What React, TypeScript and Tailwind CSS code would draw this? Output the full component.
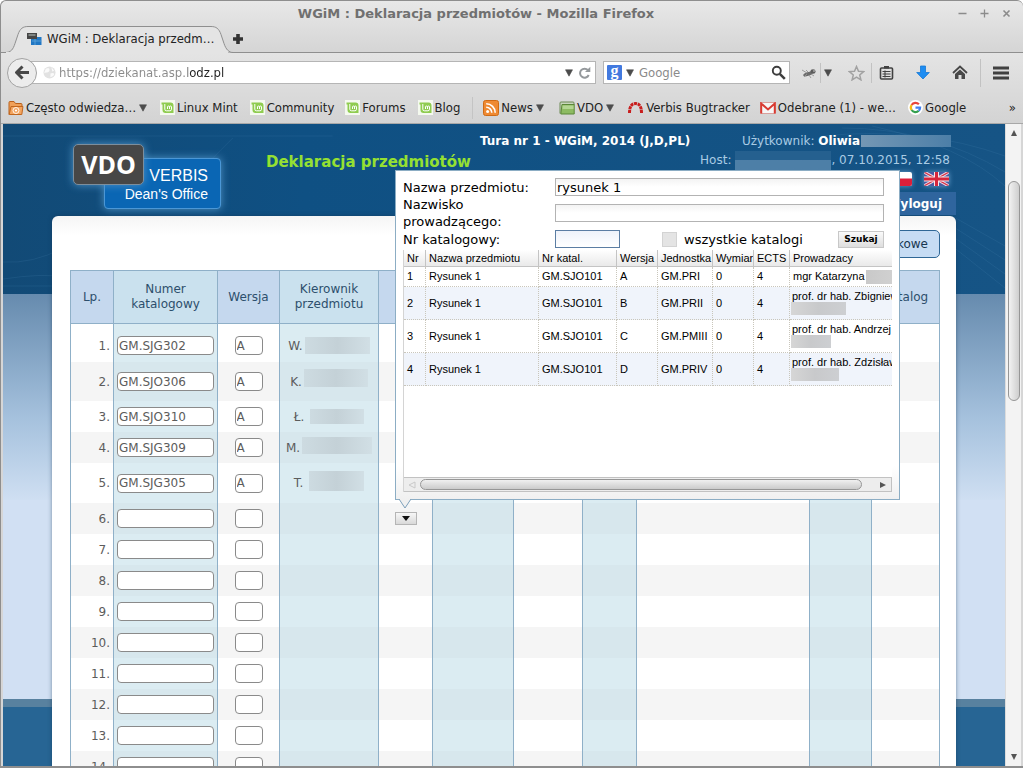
import React from "react";

const ui = "font-['DejaVu_Sans_Condensed','DejaVu_Sans',sans-serif]";

function MintIcon() {
  return (
    <svg width="15" height="15" viewBox="0 0 15 15" aria-hidden="true">
      <rect width="15" height="15" fill="#f4f9ee" />
      <path d="M1.5 2.5h9a3 3 0 0 1 3 3v7.5h-8a3 3 0 0 1-3-3V4.500h-1z" fill="#8fcc50" />
      <path d="M4.800 4v5.200a1.600 1.600 0 0 0 1.600 1.600h3.500a1.600 1.600 0 0 0 1.600-1.600V7a1 1 0 0 0-2 0v2M9.500 8V7a1 1 0 0 0-2 0v2" fill="none" stroke="#fff" strokeWidth="1" />
    </svg>
  );
}

function FolderStar() {
  return (
    <svg width="16" height="16" viewBox="0 0 16 16" aria-hidden="true">
      <path d="M1 14.500V2.500q0-1 1-1h4l1.500 2H13q1 0 1 1v2" fill="#f0a058" stroke="#b8601c" />
      <path d="M3 6.500h12l-1.200 8H1.200z" fill="#f3a560" stroke="#c0661e" />
      <circle cx="8" cy="10.500" r="3" fill="none" stroke="#fff" strokeWidth=".9" />
      <circle cx="8" cy="10.500" r="1.100" fill="#fff" />
    </svg>
  );
}

function RssIcon() {
  return (
    <svg width="16" height="16" viewBox="0 0 16 16" aria-hidden="true">
      <rect x=".5" y=".5" width="15" height="15" rx="2" fill="#ef8a33" stroke="#cf6a14" />
      <circle cx="4.600" cy="11.400" r="1.500" fill="#fff" />
      <path d="M3.200 7.200a5.600 5.600 0 0 1 5.600 5.600M3.200 3.800a9 9 0 0 1 9 9" fill="none" stroke="#fff" strokeWidth="1.600" />
    </svg>
  );
}

function GreenFolder() {
  return (
    <svg width="16" height="16" viewBox="0 0 16 16" aria-hidden="true">
      <path d="M1 13.500V3q0-1 1-1h12q1 0 1 1v2" fill="#c9d6bd" stroke="#6d8a55" />
      <path d="M3 4.500h12.200v9.500H1.800z" fill="#8dbb62" stroke="#5b8738" />
      <path d="M3.500 5.500h11v3.500h-11z" fill="#b4d692" />
    </svg>
  );
}

function BugArc() {
  return (
    <svg width="17" height="14" viewBox="0 0 17 14" aria-hidden="true">
      <path d="M2.500 12C2.500 5 5 2.500 8.500 2.500s6 2.500 6 9.500" fill="none" stroke="#c81e1e" strokeWidth="3" strokeDasharray="3 .7" />
    </svg>
  );
}

function GmailIcon() {
  return (
    <svg width="16" height="12" viewBox="0 0 16 12" aria-hidden="true">
      <rect x="1" y=".5" width="14" height="11" fill="#f6f6f6" stroke="#d9a09c" />
      <path d="M1.200 11.500V1.500L8 7.500l6.800-6v10" fill="none" stroke="#d93a31" strokeWidth="2" />
    </svg>
  );
}

function GoogleG() {
  return (
    <svg width="15" height="15" viewBox="0 0 15 15" aria-hidden="true">
      <circle cx="7.500" cy="7.500" r="7.500" fill="#fff" />
      <g fill="none" strokeWidth="2.200">
        <path d="M3.600 5A4.600 4.600 0 0 1 10.900 4.300" stroke="#e8453c" />
        <path d="M3.600 10A4.600 4.600 0 0 1 3.600 5" stroke="#f5ba15" />
        <path d="M10.700 10.800A4.600 4.600 0 0 1 3.600 10" stroke="#34a050" />
        <path d="M7.500 7.700h4.600a4.600 4.600 0 0 1-1.400 3.100" stroke="#4280ef" />
      </g>
    </svg>
  );
}

function Caret() {
  return (
    <svg width="8" height="8" viewBox="0 0 8 8" aria-hidden="true" className="shrink-0">
      <path d="M.5 .8h7L4 7.200z" fill="#4c4c4c" stroke="#4c4c4c" strokeWidth=".6" />
    </svg>
  );
}

function TitleBar() {
  const b = "flex h-4 w-[22px] items-center justify-center";
  return (
    <div className="flex h-[25px] shrink-0 items-center">
      <h1 className="flex-1 text-center font-['DejaVu_Sans',sans-serif] text-[13px] leading-[16px] font-bold text-[#707070]">
        WGiM : Deklaracja przedmiotów - Mozilla Firefox
      </h1>
      <div className="flex pr-[6px] text-[#8b8b8b]">
        <button className={b} aria-label="Minimize"><svg width="9" height="9" viewBox="0 0 9 9"><path d="M.5 4.500h8" stroke="currentColor" strokeWidth="1.300" /></svg></button>
        <button className={b} aria-label="Maximize"><svg width="9" height="9" viewBox="0 0 9 9"><path d="M.5 4.500h8M4.500 .5v8" stroke="currentColor" strokeWidth="1.300" /></svg></button>
        <button className={b} aria-label="Close"><svg width="9" height="9" viewBox="0 0 9 9"><path d="M1.500 1.500l6 6M7.500 1.500l-6 6" stroke="currentColor" strokeWidth="1.600" /></svg></button>
      </div>
    </div>
  );
}

function TabStrip() {
  return (
    <div className={"flex h-[27px] shrink-0 items-stretch border-b border-[#8f8f8f] text-[13px] " + ui}>
      <div className="relative w-[232px]">
        <svg className="absolute top-0 left-0" width="232" height="28" viewBox="0 0 232 28" aria-hidden="true">
          <path d="M1 26.500h3c6 0 8-3 10-9l3-9c2-6 5-8 10-8h183c5 0 8 2 10 8l3 9c2 6 5 9 9 9" fill="#e4e4e4" stroke="#8f8f8f" />
          <path d="M5 26.500h222" stroke="#e4e4e4" />
        </svg>
        <button className="relative flex h-[26px] w-full items-center gap-[5px] pl-[25px] text-[#222]">
          <svg width="16" height="14" viewBox="0 0 16 14" aria-hidden="true">
            <rect x="5" y="5" width="10.500" height="8" fill="#2177c4" />
            <path d="M6 9h9M9 6v7" stroke="#63a7dc" strokeWidth=".8" />
            <rect x="1" y="1" width="10" height="6" fill="#454545" />
            <path d="M2.500 3h7" stroke="#b8c4c0" strokeWidth="1.200" />
          </svg>
          WGiM : Deklaracja przedm…
        </button>
      </div>
      <button aria-label="New tab" className="flex items-center">
        <svg width="10" height="10" viewBox="0 0 10 10"><path d="M0 5h10M5 0v10" stroke="#333" strokeWidth="3.600" /></svg>
      </button>
    </div>
  );
}

function NavBar() {
  return (
    <div className={"flex h-[39px] shrink-0 items-center pr-[14px] pl-[6px] text-[13px] " + ui}>
      <button aria-label="Back" className="relative z-10 flex size-[30px] shrink-0 items-center justify-center rounded-full border border-[#a3a3a3] bg-[#ececec]">
        <svg width="14" height="15" viewBox="0 0 14 15"><path d="M7.500 1.500l-6 6 6 6M2 7.500h12" fill="none" stroke="#484848" strokeWidth="3" /></svg>
      </button>
      <div className="-ml-[6px] flex h-[23px] flex-1 items-center border border-[#b5b5b5] bg-white pr-[4px] pl-[11px]">
        <svg width="13" height="13" viewBox="0 0 14 14" aria-hidden="true" className="mr-[3px] shrink-0">
          <circle cx="7" cy="7" r="6.500" fill="#e2e2e2" />
          <path d="M3 3q4-2 4 1T4 7 1 8M8 8q4-1 4 1t-4 3zM9 1l3 4-2 1z" fill="#fafafa" />
        </svg>
        <input
          aria-label="Address"
          defaultValue="https://dziekanat.asp.lodz.pl"
          className="w-0 min-w-0 flex-1 bg-linear-to-r from-[#8a8a8a] from-[129px] to-[#222] to-[129px] bg-clip-text text-transparent caret-black outline-none"
        />
        <Caret />
        <button aria-label="Reload" className="ml-[5px]">
          <svg width="13" height="13" viewBox="0 0 13 13"><path d="M10 4.200A4.500 4.500 0 1 0 10.700 9" fill="none" stroke="#95999c" strokeWidth="2" /><path d="M12.300 .8v5.200H7z" fill="#95999c" /></svg>
        </button>
      </div>
      <div className="ml-[7px] flex h-[23px] w-[187px] items-center border border-[#b5b5b5] bg-white px-[3px]">
        <span className="flex size-[15px] items-center justify-center rounded-[1px] bg-[#4279df] pb-[3px] font-['Liberation_Serif',serif] text-[16px] leading-none font-bold text-white">g</span>
        <span className="ml-[4px] flex"><Caret /></span>
        <input aria-label="Search" placeholder="Google" className="ml-[5px] w-0 min-w-0 flex-1 outline-none placeholder:text-[#8a8a8a]" />
        <button aria-label="Run search">
          <svg width="15" height="15" viewBox="0 0 15 15"><circle cx="5.800" cy="5.800" r="4" fill="none" stroke="#3e3e3e" strokeWidth="1.900" /><path d="M8.800 8.800l5 5" stroke="#3e3e3e" strokeWidth="2.600" /></svg>
        </button>
      </div>
      <button aria-label="Firebug" className="ml-[11px]">
        <svg width="16" height="14" viewBox="0 0 16 14"><ellipse cx="7" cy="8" rx="5" ry="1.800" transform="rotate(-18 7 8)" fill="#6c6c6c" /><ellipse cx="12" cy="5.500" rx="2.600" ry="2.200" fill="#5c5c5c" /><path d="M1 4l5 3M3 11l3-3M8 9l2 3M10 8l3 2M7 6l-2-2" stroke="#959595" strokeWidth=".9" /><circle cx="13" cy="5" r=".8" fill="#d6d6d6" /></svg>
      </button>
      <span className="ml-[3px] h-[20px] w-px bg-[#c2c2c2]" />
      <span className="ml-[3px] flex"><Caret /></span>
      <button aria-label="Bookmark this page" className="ml-[16px]">
        <svg width="17" height="16" viewBox="0 0 17 16"><path d="M8.500 1.500l2 4.700 5.100.4-3.900 3.300 1.200 5-4.400-2.700-4.400 2.700 1.200-5-3.900-3.300 5.100-.4z" fill="#e0e0e0" stroke="#a2a2a2" strokeWidth="1.500" /></svg>
      </button>
      <span className="ml-[6px] h-[20px] w-px bg-[#c2c2c2]" />
      <button aria-label="Bookmarks" className="ml-[7px]">
        <svg width="15" height="15" viewBox="0 0 15 15"><rect x="1.500" y="3" width="12" height="11" rx="1" fill="none" stroke="#414141" strokeWidth="1.600" /><path d="M5 1h5v2.500H5z" fill="#414141" /><path d="M3.500 6.500h8M3.500 9h8M3.500 11.500h8M6 5.500v7" stroke="#414141" strokeWidth="1.100" /></svg>
      </button>
      <button aria-label="Downloads" className="ml-[22px]">
        <svg width="14" height="15" viewBox="0 0 14 15"><path d="M4.500 1h5v6.500h3.800L7 14 .7 7.500h3.800z" fill="#1e8df2" stroke="#1678d4" strokeWidth=".8" /></svg>
      </button>
      <button aria-label="Home" className="ml-[22px]">
        <svg width="16" height="15" viewBox="0 0 16 15"><path d="M1 8l7-6.500L15 8" fill="none" stroke="#484848" strokeWidth="1.800" /><path d="M3 9l5-4.600L13 9v5H9.500v-4h-3v4H3z" fill="#484848" /></svg>
      </button>
      <span className="ml-[12px] h-[28px] w-px bg-[#c2c2c2]" />
      <button aria-label="Menu" className="ml-[12px]">
        <svg width="16" height="14" viewBox="0 0 16 14"><path d="M0 2h16M0 7h16M0 12h16" stroke="#414141" strokeWidth="2.800" /></svg>
      </button>
    </div>
  );
}

function Bookmarks() {
  const a = "flex shrink-0 items-center gap-[2px] whitespace-nowrap";
  return (
    <nav className={"flex h-[32px] shrink-0 items-center border-b border-[#a8a8a8] pr-[7px] pl-[7px] text-[13px] text-[#222] " + ui}>
      <a href="#" className={a}><FolderStar />Często odwiedza…<span className="ml-px"><Caret /></span></a>
      <a href="#" className={a + " ml-[13px]"}><MintIcon />Linux Mint</a>
      <a href="#" className={a + " ml-[12px]"}><MintIcon />Community</a>
      <a href="#" className={a + " ml-[11px]"}><MintIcon />Forums</a>
      <a href="#" className={a + " ml-[12px]"}><MintIcon />Blog</a>
      <span className="ml-[12px] h-[22px] w-px bg-[#c4c4c4]" />
      <a href="#" className={a + " ml-[10px]"}><RssIcon />News<span className="ml-px"><Caret /></span></a>
      <a href="#" className={a + " ml-[15px]"}><GreenFolder />VDO<span className="ml-px"><Caret /></span></a>
      <a href="#" className={a + " ml-[13px]"}><BugArc />Verbis Bugtracker</a>
      <a href="#" className={a + " ml-[10px]"}><GmailIcon />Odebrane (1) - we…</a>
      <a href="#" className={a + " ml-[12px]"}><GoogleG />Google</a>
      <button className="ml-auto" aria-label="More bookmarks">»</button>
    </nav>
  );
}

function Flag({ kind }: { kind: "pl" | "gb" }) {
  return (
    <svg width="25" height="14" viewBox="0 0 25 14" className="rounded-[2px] shadow-[0_0_5px_#6aa0cc]" aria-label={kind === "pl" ? "Polski" : "English"}>
      {kind === "pl" ? (
        <><rect width="25" height="14" fill="#fff" /><rect y="6.500" width="25" height="7.500" fill="#dc1f3a" /></>
      ) : (
        <>
          <rect width="25" height="14" fill="#4a5ba3" />
          <path d="M0 0l25 14M25 0L0 14" stroke="#f2dfe4" strokeWidth="3.200" />
          <path d="M0 0l25 14M25 0L0 14" stroke="#d6324a" strokeWidth="1.300" />
          <path d="M12.500 0v14M0 7h25" stroke="#f6e6ea" strokeWidth="5" />
          <path d="M12.500 0v14M0 7h25" stroke="#d6263c" strokeWidth="3" />
        </>
      )}
    </svg>
  );
}

function Header() {
  return (
    <header className="mx-[49px] flex h-[92px] items-start">
      <div className="relative mt-[20px] ml-[21px] h-[65px] w-[148px] shrink-0">
        <div className="absolute right-0 bottom-0 h-[51px] w-[117px] rounded-[4px] border border-[#4b97d6] bg-[#0a66b4] pt-[8px] pr-[12px] text-right font-['Liberation_Sans',sans-serif] text-white shadow-[0_0_8px_#4f93c6]">
          <div className="text-[16px] leading-[18px]">VERBIS</div>
          <div className="text-[14px] leading-[18px]">Dean's Office</div>
        </div>
        <div className="absolute top-0 left-0 flex h-[41px] w-[71px] items-center justify-center rounded-[5px] border border-[#7d8e9c] bg-[#474747] font-['Open_Sans',sans-serif] text-[25px] font-bold text-white shadow-[0_0_8px_#4f93c6]">
          VDO
        </div>
      </div>
      <h2 className="mt-[28px] ml-[45px] shrink-0 text-[15px] leading-[20px] font-bold text-[#95e032]">Deklaracja przedmiotów</h2>
      <p className="mt-[9px] ml-[9px] shrink-0 text-[12px] leading-[16px] font-bold text-white">Tura nr 1 - WGiM, 2014 (J,D,PL)</p>
      <div className="ml-auto flex shrink-0 flex-col items-end text-[12px] text-[#a9cbe4]">
        <div className="mt-[8px] mr-[5px] flex h-[18px] items-center">
          <span>Użytkownik: <b className="text-white">Oliwia</b></span>
          <span className="ml-px h-[12px] w-[90px] bg-linear-to-r from-[#7497b4] to-[#4c7fa8]" />
        </div>
        <div className="mr-[6px] flex h-[20px] items-center">
          <span>Host:</span>
          <span className="mt-px ml-[4px] h-[19px] w-[96px] bg-linear-to-b from-[#25608f] from-45% to-[#4d7fa7] to-45%" />
          <span>, 07.10.2015, 12:58</span>
        </div>
        <div className="mt-[2px] mr-[7px] flex h-[14px] gap-[12px]">
          <Flag kind="pl" />
          <Flag kind="gb" />
        </div>
        <a href="#" className="mt-[6px] flex h-[23px] items-center bg-[#2f659e] px-[14px] text-[12px] font-bold text-white">Wyloguj</a>
      </div>
    </header>
  );
}

type Row = { code?: string; version?: string; initial?: string; blur?: string; h: string };

const rows: Row[] = [
  { code: "GM.SJG302", version: "A", initial: "W.", blur: "h-[17px] w-[65px]", h: "h-[38px] [&>td]:pt-[5px]" },
  { code: "GM.SJO306", version: "A", initial: "K.", blur: "mb-[8px] h-[18px] w-[64px]", h: "h-[39px]" },
  { code: "GM.SJO310", version: "A", initial: "Ł.", blur: "ml-[4px] h-[15px] w-[54px]", h: "h-[31px]" },
  { code: "GM.SJG309", version: "A", initial: "M.", blur: "mb-[4px] h-[17px] w-[70px]", h: "h-[31px]" },
  { code: "GM.SJG305", version: "A", initial: "T.", blur: "ml-[4px] mb-[4px] h-[20px] w-[55px]", h: "h-[40px]" },
  ...Array.from({ length: 9 }, () => ({ h: "h-[31px]" })),
];

const columns = [
  { label: "Lp.", w: "w-[43px]" },
  { label: "Numer katalogowy", w: "w-[104px]" },
  { label: "Wersja", w: "w-[62px]" },
  { label: "Kierownik przedmiotu", w: "w-[99px]" },
  { label: "", w: "w-[54px]" },
  { label: "", w: "w-[81px]" },
  { label: "", w: "w-[69px]" },
  { label: "", w: "w-[54px]" },
  { label: "", w: "w-auto" },
  { label: "", w: "w-[62px]" },
  { label: "Katalog", w: "w-[68px]" },
];

function DeclarationTable() {
  const field = "h-[19px] rounded-[4px] border border-[#8a8a8a] bg-white pl-[1px] text-[12px] text-[#5c5c5c] outline-none";
  return (
    <table className="mt-[12px] w-full table-fixed border-separate border-spacing-0 border-t border-l border-[#8fb0c8] text-[12px] text-[#5c5c5c]">
      <colgroup>
        {columns.map((c, i) => <col key={i} className={c.w} />)}
      </colgroup>
      <thead>
        <tr className="h-[53px]">
          {columns.map((c, i) => (
            <th key={i} scope="col" className={"border-r border-b border-[#8fb0c8] px-[8px] leading-[15px] font-normal text-[#2d4f6c] " + (i % 2 ? "bg-[#cae1ee]" : "bg-[#c5d8ee]")}>{c.label}</th>
          ))}
        </tr>
      </thead>
      <tbody>
        {rows.map((r, n) => {
          const even = n % 2 === 1;
          return (
            <tr key={n} className={r.h}>
              {columns.map((_, i) => {
                const bg = i % 2 ? (even ? "bg-[#d7e7ed]" : "bg-[#dbecf2]") : even ? "bg-[#f5f5f5]" : "bg-white";
                return (
                  <td key={i} className={"border-r border-[#8fb0c8] p-0 align-middle " + bg}>
                    {i === 0 && <div className="pr-[3px] text-right">{n + 1}.</div>}
                    {i === 1 && <div className="flex px-[3px]"><input aria-label={`Numer katalogowy ${n + 1}`} defaultValue={r.code} className={"w-full min-w-0 " + field} /></div>}
                    {i === 2 && <div className="flex justify-center"><input aria-label={`Wersja ${n + 1}`} defaultValue={r.version} className={"w-[28px] " + field} /></div>}
                    {i === 3 && r.initial && (
                      <div className="flex h-[20px] items-center justify-center">
                        <span className="mr-[2px]">{r.initial}</span>
                        <span className={"bg-linear-to-r from-[#cddbe1] via-[#c4d1d7] to-[#d1dfe5] " + r.blur} />
                      </div>
                    )}
                    {i === 4 && n === 5 && (
                      <div className="flex pl-[16px]">
                        <button aria-label="Wybierz przedmiot" className="flex h-[13px] w-[22px] items-center justify-center border border-[#b5b5b5] bg-linear-to-b from-[#f7f7f7] to-[#d9d9d9]">
                          <svg width="8" height="5" viewBox="0 0 8 5"><path d="M0 0h8L4 5z" fill="#111" /></svg>
                        </button>
                      </div>
                    )}
                  </td>
                );
              })}
            </tr>
          );
        })}
      </tbody>
    </table>
  );
}

const results = [
  ["1", "Rysunek 1", "GM.SJO101", "A", "GM.PRI", "0", "4", "mgr Katarzyna"],
  ["2", "Rysunek 1", "GM.SJO101", "B", "GM.PRII", "0", "4", "prof. dr hab. Zbigniew"],
  ["3", "Rysunek 1", "GM.SJO101", "C", "GM.PMIII", "0", "4", "prof. dr hab. Andrzej"],
  ["4", "Rysunek 1", "GM.SJO101", "D", "GM.PRIV", "0", "4", "prof. dr hab. Zdzisław"],
];

const resultCols = [
  { label: "Nr", w: "w-[22px]" },
  { label: "Nazwa przedmiotu", w: "w-[113px]" },
  { label: "Nr katal.", w: "w-[78px]" },
  { label: "Wersja", w: "w-[41px]" },
  { label: "Jednostka", w: "w-[55px]" },
  { label: "Wymiar", w: "w-[41px]" },
  { label: "ECTS", w: "w-[36px]" },
  { label: "Prowadzacy", w: "w-auto" },
];

const blurs = ["", "w-[55px]", "w-[40px]", "w-[48px]"];

function SearchPopup() {
  const input = "h-[18px] border border-[#b3b3b3] bg-linear-to-b from-[#f3f3f3] to-white to-50% px-px outline-none";
  return (
    <section className="absolute top-[46px] left-[392px] w-[505px] border border-[#8cadc4] bg-linear-to-b from-white from-90% to-[#f0f0f0] p-[7px] text-[13px] leading-[17px] text-black">
      <form className="grid grid-cols-[152px_1fr] grid-rows-[18px_34px_18px] items-center pr-[8px]">
        <label htmlFor="f-name">Nazwa przedmiotu:</label>
        <input id="f-name" defaultValue="rysunek 1" className={input} />
        <label htmlFor="f-person">Nazwisko prowadzącego:</label>
        <input id="f-person" className={input} />
        <label htmlFor="f-number">Nr katalogowy:</label>
        <div className="flex items-center">
          <input id="f-number" className="h-[18px] w-[65px] border border-[#5b7da3] bg-linear-to-b from-[#eef2fa] to-white outline-none" />
          <input id="f-all" type="checkbox" className="ml-[42px] size-[15px] appearance-none border border-[#d3d3d3] bg-[#e4e4e4]" />
          <label htmlFor="f-all" className="ml-[7px]">wszystkie katalogi</label>
          <button type="button" className="ml-auto h-[17px] w-[46px] border border-[#c8c8c8] bg-linear-to-b from-[#fafafa] to-[#dedede] text-[9px] leading-[13px] font-bold">Szukaj</button>
        </div>
      </form>
      <div className="mt-[2px] flex h-[242px] flex-col overflow-hidden border-l border-[#d4d4d4] bg-white">
        <table className="w-full table-fixed border-separate border-spacing-0 font-['Liberation_Sans',sans-serif] text-[11px] leading-[11px]">
          <colgroup>{resultCols.map((c) => <col key={c.label} className={c.w} />)}</colgroup>
          <thead>
            <tr className="h-[17px]">
              {resultCols.map((c, i) => (
                <th key={c.label} scope="col" className={"overflow-hidden border-b border-[#c4c4c4] bg-linear-to-b from-white to-[#e9e9e9] p-0 pl-[3px] text-left font-normal whitespace-nowrap " + (i < 7 ? "border-r" : "")}>{c.label}</th>
              ))}
            </tr>
          </thead>
          <tbody>
            {results.map((r, n) => (
              <tr key={n} className={n === 0 ? "h-[20px]" : n % 2 ? "h-[33px] bg-[#f0f4fb]" : "h-[33px]"}>
                {r.map((v, i) => (
                  <td key={i} className={"overflow-hidden border-b border-dotted border-[#c9c6bb] p-0 align-middle whitespace-nowrap " + (i < 7 ? "border-r pl-[3px]" : "")}>
                    {i < 7 ? v : n === 0 ? (
                      <div className="flex items-center pl-[3px]">{v}<span className="ml-px h-[14px] w-[40px] shrink-0 bg-linear-to-r from-[#c9c9c9] to-[#d4d4d4]" /></div>
                    ) : (
                      <div className="flex flex-col">
                        <span className="pl-[2px]">{v}</span>
                        <span className={"ml-px h-[13px] bg-linear-to-r from-[#d6d6d6] via-[#c8c9cb] to-[#cdcfd2] " + blurs[n]} />
                      </div>
                    )}
                  </td>
                ))}
              </tr>
            ))}
          </tbody>
        </table>
        <div className="mt-auto flex h-[15px] items-center border border-l-0 border-[#c2c2c2] bg-[#ededed]">
          <svg width="16" height="8" viewBox="0 0 16 8"><path d="M11 1v6L5 4z" fill="none" stroke="#c9c9c9" /></svg>
          <span className="h-[11px] w-[442px] rounded-full border border-[#969696] bg-linear-to-b from-[#f0f0f0] to-[#cbcbcb]" />
          <svg className="mr-[5px] ml-auto" width="7" height="8" viewBox="0 0 7 8"><path d="M1 1v6l6-3z" fill="#555" /></svg>
        </div>
      </div>
      <svg className="absolute top-full left-[3px]" width="12" height="10" viewBox="0 0 12 10" aria-hidden="true">
        <path d="M0 0l6 9 6-9" fill="#f0f0f0" stroke="#7c9fb9" />
        <path d="M1 0h10" stroke="#f0f0f0" />
      </svg>
    </section>
  );
}

function PageScrollbar() {
  return (
    <div className="flex w-[16px] shrink-0 flex-col items-center border-l border-[#dcdcdc] bg-[#f3f3f3]" aria-hidden="true">
      <svg className="mt-[6px]" width="8" height="7" viewBox="0 0 8 7"><path d="M1 6h6L4 0z" fill="#555" /></svg>
      <span className="mt-[44px] h-[220px] w-[12px] rounded-full border border-[#969696] bg-linear-to-r from-[#f2f2f2] to-[#cecece]" />
      <svg className="mt-auto mb-[5px]" width="8" height="7" viewBox="0 0 8 7"><path d="M1 0h6L4 6z" fill="#555" /></svg>
    </div>
  );
}

export default function App() {
  return (
    <div className="flex h-screen flex-col overflow-hidden rounded-t-[6px] border-t border-b-2 border-l border-[#8e8e8e] bg-[#d6d6d6] bg-linear-to-b from-[#e8e8e8] via-[#d6d6d6] via-[48px] to-[#d6d6d6] to-[60px] font-['DejaVu_Sans',sans-serif]">
      <TitleBar />
      <TabStrip />
      <div className="shrink-0 bg-linear-to-b from-[#e4e4e4] to-[#d3d3d3]">
        <NavBar />
        <Bookmarks />
      </div>
      <div className="mr-[2px] ml-[2px] flex min-h-0 flex-1">
        <main className="relative min-w-0 flex-1 overflow-hidden">
          <div className="absolute inset-0 flex flex-col" aria-hidden="true">
            <svg className="h-[170px] w-full shrink-0" viewBox="0 0 1003 170" preserveAspectRatio="none">
              <defs>
                <linearGradient id="sky" x1="0" y1="0" x2="1" y2="0">
                  <stop offset="0" stopColor="#124a76" />
                  <stop offset=".3" stopColor="#0f5083" />
                  <stop offset="1" stopColor="#165485" />
                </linearGradient>
              </defs>
              <rect width="1003" height="170" fill="url(#sky)" />
              <g fill="none" stroke="#5c9ac8" strokeOpacity=".14">
                <path d="M0 12h330M230 14l-60 60M0 138q30 2 60-14M0 155q40-6 60-2M0 162h60" />
                <path d="M820 12q100-10 183 20M840 4q90 0 163 44M870 2q90 20 133 60M950 92l53 30M950 102l53 34M950 112l53 38M950 122l53 42" />
              </g>
            </svg>
            <div className="h-[206px] shrink-0 bg-linear-to-b from-[#668bae] via-[#a5c1dd] via-60% to-[#cfdff2]" />
            <div className="min-h-0 flex-1 bg-[#d1e0f3]" />
            <div className="h-[8px] shrink-0 bg-[#58819f]" />
            <div className="h-[59px] shrink-0 bg-[#276594]" />
          </div>
          <div className="relative">
            <Header />
            <div className="mx-[49px] rounded-t-[6px] bg-linear-to-b from-[#f5f5f5] to-white to-[20px] pt-[14px] pr-[16px] pl-[18px] shadow-[0_0_4px_rgba(20,50,80,0.5)]">
              <div className="flex justify-end">
                <button className="h-[28px] rounded-[5px] border border-[#2f6796] bg-[#c6dcf4] px-[11px] text-[12px] text-[#173650]">Dodatkowe</button>
              </div>
              <DeclarationTable />
            </div>
          </div>
          <SearchPopup />
        </main>
        <PageScrollbar />
      </div>
    </div>
  );
}
